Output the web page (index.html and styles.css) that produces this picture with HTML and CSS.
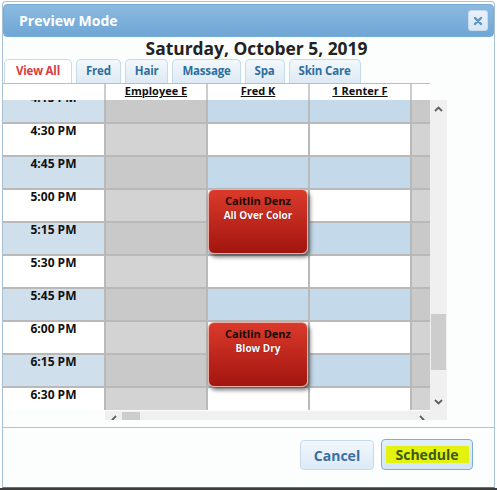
FILE: index.html
```html
<!DOCTYPE html>
<html>
<head>
<meta charset="utf-8">
<link rel="stylesheet" href="styles.css">
</head>
<body>
<div class="dialog">
  <div class="titlebar">
    <span class="title">Preview Mode</span>
    <button class="close"><svg width="10" height="10" viewBox="0 0 10 10"><path d="M2 2L8 8M8 2L2 8" stroke="#5b92c8" stroke-width="2.4" stroke-linecap="round"/></svg></button>
  </div>
  <h1 class="date">Saturday, October 5, 2019</h1>
  <ul class="tabs">
    <li class="tab active">View All</li>
    <li class="tab">Fred</li>
    <li class="tab">Hair</li>
    <li class="tab">Massage</li>
    <li class="tab">Spa</li>
    <li class="tab">Skin Care</li>
  </ul>
  <div class="schedule">
    <div class="head-row">
      <div class="hcell"></div>
      <div class="hcell"><span class="hname">Employee E</span></div>
      <div class="hcell"><span class="hname">Fred K</span></div>
      <div class="hcell"><span class="hname">1 Renter F</span></div>
      <div class="hcell"></div>
    </div>
    <div class="body-wrap">
      <div class="viewport">
        <div class="rows">
          <div class="row alt"><div class="cell time">4:15 PM</div><div class="cell off"></div><div class="cell"></div><div class="cell"></div><div class="cell off"></div></div>
          <div class="row"><div class="cell time">4:30 PM</div><div class="cell off"></div><div class="cell"></div><div class="cell"></div><div class="cell off"></div></div>
          <div class="row alt"><div class="cell time">4:45 PM</div><div class="cell off"></div><div class="cell"></div><div class="cell"></div><div class="cell off"></div></div>
          <div class="row"><div class="cell time">5:00 PM</div><div class="cell off"></div><div class="cell"></div><div class="cell"></div><div class="cell off"></div></div>
          <div class="row alt"><div class="cell time">5:15 PM</div><div class="cell off"></div><div class="cell"></div><div class="cell"></div><div class="cell off"></div></div>
          <div class="row"><div class="cell time">5:30 PM</div><div class="cell off"></div><div class="cell"></div><div class="cell"></div><div class="cell off"></div></div>
          <div class="row alt"><div class="cell time">5:45 PM</div><div class="cell off"></div><div class="cell"></div><div class="cell"></div><div class="cell off"></div></div>
          <div class="row"><div class="cell time">6:00 PM</div><div class="cell off"></div><div class="cell"></div><div class="cell"></div><div class="cell off"></div></div>
          <div class="row alt"><div class="cell time">6:15 PM</div><div class="cell off"></div><div class="cell"></div><div class="cell"></div><div class="cell off"></div></div>
          <div class="row"><div class="cell time">6:30 PM</div><div class="cell off"></div><div class="cell"></div><div class="cell"></div><div class="cell off"></div></div>
        </div>
        <div class="appt" style="top:89px"><div class="appt-name">Caitlin Denz</div><div class="appt-svc">All Over Color</div></div>
        <div class="appt" style="top:222px"><div class="appt-name">Caitlin Denz</div><div class="appt-svc">Blow Dry</div></div>
      </div>
      <div class="vscroll">
        <div class="vs-btn"><svg width="9" height="6" viewBox="0 0 9 6"><path d="M1 5L4.5 1.5L8 5" fill="none" stroke="#606060" stroke-width="1.8"/></svg></div>
        <div class="vs-track"><div class="vs-thumb"></div></div>
        <div class="vs-btn"><svg width="9" height="6" viewBox="0 0 9 6"><path d="M1 1L4.5 4.5L8 1" fill="none" stroke="#606060" stroke-width="1.8"/></svg></div>
      </div>
    </div>
    <div class="hscroll-row">
      <div class="hs-spacer"></div>
      <div class="hscroll">
        <div class="hs-btn"><svg width="6" height="9" viewBox="0 0 6 9"><path d="M5 1L1.5 4.5L5 8" fill="none" stroke="#606060" stroke-width="1.8"/></svg></div>
        <div class="hs-thumb"></div>
        <div class="hs-track"></div>
        <div class="hs-btn"><svg width="6" height="9" viewBox="0 0 6 9"><path d="M1 1L4.5 4.5L1 8" fill="none" stroke="#606060" stroke-width="1.8"/></svg></div>
      </div>
      <div class="hs-corner"></div>
    </div>
  </div>
  <div class="footer">
    <button class="btn cancel">Cancel</button>
    <button class="btn schedule-btn"><span class="hl">Schedule</span></button>
  </div>
</div>
<div class="page-edge"></div>
</body>
</html>
```

FILE: styles.css
```css
body {
  margin: 0;
  background: #ffffff;
  font-family: "Open Sans", "DejaVu Sans", sans-serif;
}

.dialog {
  margin: 1px 0 0 2px;
  width: 491px;
  height: 485px;
  border: 1px solid #a9c1d6;
  border-bottom-color: #707070;
  border-radius: 4px 4px 0 0;
  background: #fcfdfd;
  overflow: hidden;
}

.titlebar {
  margin-top: 2px;
  height: 33px;
  box-sizing: border-box;
  border: 1px solid #78acd8;
  border-radius: 4px;
  background: linear-gradient(#8abae0, #70a6d5);
  display: flex;
  align-items: center;
  justify-content: space-between;
  padding: 0 5px 0 15px;
}

.title {
  color: #ffffff;
  font-weight: 700;
  font-size: 14px;
}

.close {
  width: 20px;
  height: 21px;
  padding: 0;
  border: 1px solid #c6dbee;
  border-radius: 3px;
  background: linear-gradient(#e9f1f9, #d8e6f3);
  display: flex;
  align-items: center;
  justify-content: center;
}

.date {
  margin: 0;
  padding-left: 16px;
  font-size: 17.4px;
  line-height: 22px;
  text-align: center;
  font-weight: 700;
  color: #222222;
}

.tabs {
  list-style: none;
  margin: 0;
  padding: 0 0 0 1px;
  display: flex;
  gap: 4px;
  height: 24px;
}

.tab {
  box-sizing: border-box;
  height: 24px;
  border: 1px solid #c5dbec;
  border-bottom: none;
  border-radius: 5px 5px 0 0;
  background: linear-gradient(#f3f8fc, #dde9f4);
  color: #2e6e9e;
  font-weight: 700;
  font-size: 11.5px;
  letter-spacing: -0.2px;
  line-height: 22px;
  padding: 0 9px;
}

.tab.active {
  background: #ffffff;
  color: #dc3a3e;
  padding: 0 11px;
}

.head-row {
  display: grid;
  grid-template-columns: 101px 100px 100px 100px 18px;
  column-gap: 2px;
  width: 427px;
  height: 16px;
  border-top: 1px solid #bdbdbd;
  background: #cdcdcd;
}

.hcell {
  background: #ffffff;
  text-align: center;
  font-size: 11px;
  font-weight: 700;
  line-height: 13px;
  color: #111111;
}

.hname {
  text-decoration: underline;
}

.body-wrap {
  display: flex;
  height: 310px;
}

.viewport {
  position: relative;
  width: 427px;
  height: 310px;
  overflow: hidden;
}

.rows {
  margin-top: -11px;
}

.row {
  display: grid;
  grid-template-columns: 101px 100px 100px 100px 18px;
  column-gap: 2px;
  height: 31px;
  border-top: 2px solid #b9b9b9;
  background: #b9b9b9;
}

.cell {
  background: #ffffff;
}

.row.alt .cell {
  background: #c4d9ea;
}

.time {
  text-align: center;
  font-weight: 700;
  font-size: 12px;
  line-height: 14px;
  color: #111111;
}

.row.alt .cell.time {
  background: #cfdfec;
}

.row .cell.off {
  background: #d3d3d3;
}

.row.alt .cell.off {
  background: #c9c9c9;
}

.appt {
  position: absolute;
  left: 205px;
  width: 100px;
  height: 65px;
  box-sizing: border-box;
  border: 1px solid #eab0a8;
  border-radius: 6px;
  background: linear-gradient(#db3a2b, #a2150f);
  box-shadow: 2px 3px 4px rgba(0, 0, 0, 0.55);
  text-align: center;
}

.appt-name {
  margin-top: 4px;
  font-size: 11px;
  font-weight: 700;
  line-height: 14px;
  color: #1b0b08;
}

.appt-svc {
  font-size: 10px;
  font-weight: 700;
  line-height: 14px;
  color: #ffffff;
  text-shadow: 0 0 1px #7a0000;
}

.vscroll {
  width: 17px;
  height: 310px;
  background: #f0f0f0;
  display: flex;
  flex-direction: column;
}

.vs-btn {
  height: 17px;
  display: flex;
  align-items: center;
  justify-content: center;
}

.vs-track {
  flex: 1;
}

.vs-thumb {
  margin: 197px 1px 0;
  height: 56px;
  background: #cdcdcd;
}

.hscroll-row {
  display: flex;
  height: 10px;
  overflow: hidden;
}

.hs-spacer {
  width: 102px;
}

.hscroll {
  width: 325px;
  height: 17px;
  margin-top: 1px;
  background: #f0f0f0;
  display: flex;
}

.hs-btn {
  width: 17px;
  height: 17px;
  display: flex;
  align-items: center;
  justify-content: center;
}

.hs-thumb {
  width: 18px;
  height: 15px;
  margin-top: 1px;
  background: #cdcdcd;
}

.hs-track {
  flex: 1;
}

.hs-corner {
  width: 17px;
  height: 10px;
  background: #f0f0f0;
}

.footer {
  margin-top: 7px;
  border-top: 1px solid #a8c6df;
  display: flex;
  justify-content: flex-end;
  align-items: flex-end;
  gap: 7px;
  padding: 11px 21px 0 0;
}

.btn {
  box-sizing: border-box;
  border: 1px solid #c5dbec;
  border-radius: 4px;
  background: linear-gradient(#f1f7fd, #dceaf7);
  font-family: inherit;
  font-weight: 700;
  font-size: 14px;
  color: #3a6fa3;
  padding: 0;
}

.cancel {
  width: 74px;
  height: 30px;
}

.schedule-btn {
  width: 92px;
  height: 31px;
  border-color: #79b0dd;
  background: linear-gradient(#e3effa, #d3e5f6);
}

.hl {
  display: inline-block;
  background: #e3f20e;
  color: #3a5a10;
  line-height: 17px;
  padding: 0 10px;
}

.page-edge {
  height: 2px;
  background: #3c3c3c;
}
```
